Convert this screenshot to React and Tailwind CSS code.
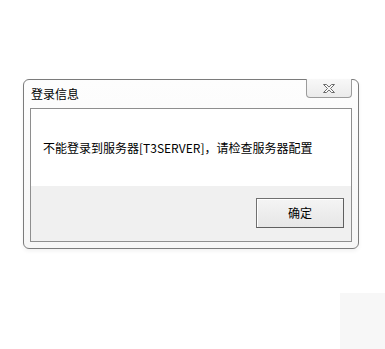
import React from "react";

const font = { fontFamily: '"Microsoft YaHei", "Noto Sans CJK SC", "Liberation Sans", sans-serif' };

function CloseGlyph() {
  return (
    <svg width="14" height="11" viewBox="0 0 14 11">
      <path
        d="M1.5 1.5h3l2.5 2.6 2.5-2.6h3l-4 4 4 4h-3l-2.5-2.6-2.5 2.6h-3l4-4z"
        fill="#fcfcfc"
        stroke="#6a6a6a"
        strokeWidth="1"
        strokeLinejoin="round"
      />
    </svg>
  );
}

export default function App() {
  return (
    <div className="w-[385px] h-[349px] bg-white overflow-hidden flex flex-col" style={font}>
      <div className="ml-[23px] mt-[79px] w-[336px] h-[170px] rounded-[6px] border border-[#7b7b7b] bg-gradient-to-b from-[#fdfdfd] to-[#f6f6f6] flex flex-col shadow-[0_2px_4px_rgba(0,0,0,0.06)]">
        <div className="h-[28px] flex items-start">
          <div className="pl-[7px] pt-[6px] text-[12px] leading-[16px] text-black">登录信息</div>
          <div className="ml-auto mr-[6px] w-[46px] h-[19px] -mt-px border border-[#9b9b9b] border-t-0 rounded-b-[4px] bg-gradient-to-b from-[#f8f8f8] to-[#ebebeb] flex items-center justify-center">
            <CloseGlyph />
          </div>
        </div>
        <div className="mx-[6px] h-[134px] border border-[#8e8e8e] flex flex-col">
          <div className="h-[77px] bg-white pl-[12px] pt-[31px] text-[12px] leading-[16px] text-black">
            不能登录到服务器[T3SERVER]，请检查服务器配置
          </div>
          <div className="flex-1 bg-[#f0f0f0] flex justify-end pr-[7px] pt-[12px]">
            <div className="w-[88px] h-[30px] border border-[#707070] border-b-[#5f5f5f] border-r-[#5f5f5f] bg-gradient-to-b from-[#f4f4f4] to-[#e6e6e6] shadow-[inset_1px_1px_0_#ffffff] flex items-center justify-center text-[12px] text-black">
              确定
            </div>
          </div>
        </div>
      </div>
      <div className="ml-auto mt-[44px] w-[45px] h-[56px] bg-[#f7f7f7]" />
    </div>
  );
}
